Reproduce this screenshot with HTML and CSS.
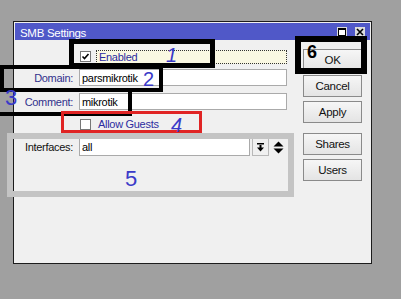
FILE: index.html
```html
<!DOCTYPE html>
<html lang="en">
<head>
    <meta charset="UTF-8">
    <meta name="viewport" content="width=device-width, initial-scale=1.0">
    <title>SMB Settings</title>
    <link rel="stylesheet" href="styles.css">
</head>
<body>
    <div class="window">
        <div class="titlebar">
            <span class="title">SMB Settings</span>
            <span class="tb-btns">
                <span class="tb-btn">
                    <svg width="8" height="8" viewBox="0 0 8 8"><rect x="0.5" y="0.5" width="7" height="7" fill="#fff" stroke="#000"/><rect x="0" y="0" width="8" height="2" fill="#000"/></svg>
                </span>
                <span class="tb-btn">
                    <svg width="8" height="8" viewBox="0 0 8 8"><path d="M1 1 L7 7 M7 1 L1 7" stroke="#000" stroke-width="1.6"/></svg>
                </span>
            </span>
        </div>

        <div class="content">
            <div class="form">
                <div class="row row-enabled">
                    <span class="label"></span>
                    <div class="field">
                        <span class="checkbox">
                            <svg width="9" height="9" viewBox="0 0 9 9"><path d="M1.5 4.5 L3.5 6.5 L7.5 2" fill="none" stroke="#000" stroke-width="1.6"/></svg>
                        </span>
                        <span class="check-label focused">Enabled</span>
                    </div>
                </div>
                <div class="row row-domain">
                    <span class="label">Domain:</span>
                    <div class="field"><span class="input">parsmikrotik</span></div>
                </div>
                <div class="row row-comment">
                    <span class="label">Comment:</span>
                    <div class="field"><span class="input">mikrotik</span></div>
                </div>
                <div class="row row-guests">
                    <span class="label"></span>
                    <div class="field">
                        <span class="checkbox"></span>
                        <span class="check-label">Allow Guests</span>
                    </div>
                </div>
                <div class="row row-ifaces">
                    <span class="label plain">Interfaces:</span>
                    <div class="field">
                        <span class="input input-short">all</span>
                        <span class="dd-btn">
                            <svg width="9" height="9" viewBox="0 0 9 9"><rect x="1" y="0" width="7" height="1.5" fill="#000"/><rect x="3.5" y="2" width="2" height="3" fill="#000"/><path d="M1 4.5 H8 L4.5 8.5 Z" fill="#000"/></svg>
                        </span>
                        <span class="updown">
                            <svg width="11" height="13" viewBox="0 0 11 13"><path d="M0.5 5.5 L5.5 0.5 L10.5 5.5 Z" fill="#000"/><path d="M0.5 7.5 L5.5 12.5 L10.5 7.5 Z" fill="#000"/></svg>
                        </span>
                    </div>
                </div>
            </div>

            <div class="buttons">
                <div class="button">OK</div>
                <div class="button">Cancel</div>
                <div class="button">Apply</div>
                <div class="button gap-top">Shares</div>
                <div class="button">Users</div>
            </div>
        </div>
    </div>

    <!-- annotation marks drawn over the dialog -->
    <div class="box box1"></div>
    <div class="box box2"></div>
    <div class="box box3"></div>
    <div class="box box4"></div>
    <div class="box box5"></div>
    <div class="box box6"></div>

    <span class="num num1">1</span>
    <span class="num num2">2</span>
    <span class="num num3">3</span>
    <span class="num num4">4</span>
    <span class="num num5">5</span>
    <span class="num num6">6</span>
</body>
</html>
```

FILE: styles.css
```css
* {
    margin: 0;
    padding: 0;
    box-sizing: border-box;
}

body {
    position: relative;
    width: 401px;
    height: 299px;
    overflow: hidden;
    background: #a0a0a0;
    font-family: "Liberation Sans", Arial, sans-serif;
    font-size: 11px;
    letter-spacing: -0.3px;
    padding: 21px 0 0 13px;
}

.window {
    width: 359px;
    height: 243px;
    border: 1px solid #1c1c1c;
    padding: 1px;
    background: #f0f0f0;
}

.titlebar {
    height: 17px;
    background: #5058c8;
    color: #fff;
    display: flex;
    align-items: center;
    padding: 2px 0 0 5px;
    font-size: 11.5px;
}

.tb-btns {
    margin-left: auto;
    display: flex;
    gap: 8px;
    padding-right: 5px;
    margin-top: -2px;
}

.tb-btn {
    width: 10px;
    height: 10px;
    background: #dcdcdc;
    display: flex;
    align-items: center;
    justify-content: center;
}

.content {
    display: flex;
    padding-top: 9px;
}

.form {
    width: 272px;
}

.row {
    display: grid;
    grid-template-columns: 58px 208px;
    column-gap: 6px;
    align-items: center;
}

.row-enabled { height: 15px; }
.row-domain { height: 17px; margin-top: 5px; }
.row-comment { height: 17px; margin-top: 7px; }
.row-guests { height: 14px; margin-top: 7px; }
.row-ifaces { height: 18px; margin-top: 7px; }

.label {
    text-align: right;
    color: #30308c;
}

.label.plain {
    color: #111;
}

.field {
    display: flex;
    align-items: center;
    height: 100%;
}

.input {
    flex: 1;
    height: 100%;
    border: 1px solid #aaa;
    background: #fff;
    color: #000;
    padding-left: 2px;
    display: flex;
    align-items: center;
}

.input-short {
    flex: none;
    width: 171px;
}

.checkbox {
    width: 11px;
    height: 11px;
    margin-left: 1px;
    border: 1px solid #777;
    background: #fff;
    display: flex;
    align-items: center;
    justify-content: center;
}

.check-label {
    margin-left: 5px;
    color: #2c2ca0;
    padding-left: 2px;
}

.check-label.focused {
    flex: 1;
    height: 14px;
    border: 1px dotted #333;
    background: #faf8e2;
    display: flex;
    align-items: center;
}

.dd-btn {
    width: 17px;
    height: 18px;
    margin-left: 2px;
    border: 1px solid #b8b8b8;
    background: #f0f0f0;
    display: flex;
    align-items: center;
    justify-content: center;
}

.updown {
    margin-left: 4px;
    display: flex;
    align-items: center;
}

.buttons {
    margin-left: 16px;
    width: 59px;
    display: flex;
    flex-direction: column;
    gap: 4px;
}

.button {
    height: 22px;
    border: 1px solid #8a8a8a;
    background: linear-gradient(#f6f6f6, #e4e4e4);
    color: #111;
    font-size: 11.5px;
    display: flex;
    align-items: center;
    justify-content: center;
}

.button.gap-top {
    margin-top: 6px;
}

/* annotation overlays */
.box {
    position: absolute;
    border: 5px solid #000;
}

.box1 { left: 69px; top: 39px; width: 146px; height: 29px; }
.box2 { left: 0; top: 65px; width: 163px; height: 27px; border-width: 4px; }
.box3 { left: -5px; top: 88px; width: 137px; height: 28px; border-width: 4px; }
.box4 { left: 61px; top: 111px; width: 141px; height: 22px; border: 3px solid #e02424; }
.box5 { left: 7px; top: 133px; width: 287px; height: 64px; border: 6px solid #c4c4c4; }
.box6 { left: 295px; top: 36px; width: 72px; height: 38px; border-width: 6px; }

.num {
    position: absolute;
    color: #3a3ac8;
    font-size: 20px;
    line-height: 1;
    letter-spacing: 0;
}

.num1 { left: 166px; top: 45px; font-style: italic; }
.num2 { left: 143px; top: 69px; }
.num3 { left: 5px; top: 87px; font-size: 22px; }
.num4 { left: 171px; top: 115px; font-style: italic; }
.num5 { left: 125px; top: 168px; font-size: 22px; }
.num6 { left: 307px; top: 43px; font-size: 18px; font-weight: bold; color: #000; }
```
